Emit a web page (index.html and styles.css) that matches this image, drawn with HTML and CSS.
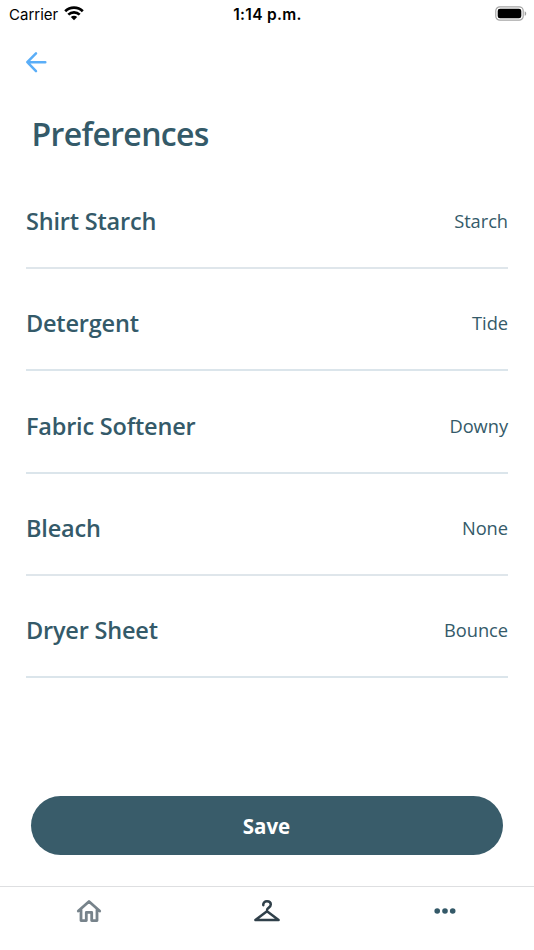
FILE: index.html
```html
<!DOCTYPE html>
<html lang="en">
<head>
<meta charset="utf-8">
<title>Preferences</title>
<link rel="stylesheet" href="styles.css">
</head>
<body>
<header class="status">
  <div class="carrier"><span>Carrier</span>
    <svg width="20" height="15" viewBox="0 0 20 15" fill="none" stroke="#000" stroke-width="2.7"><path d="M1.2 5.3C6.1.5 13.9.5 18.8 5.3M4.3 8.6c3.2-3.1 8.2-3.1 11.4 0"/><path d="M6.8 11.1c1.8-1.7 4.6-1.7 6.4 0L10 14.3z" fill="#000" stroke="none"/></svg>
  </div>
  <div class="time">1:14 p.m.</div>
  <svg class="battery" width="32" height="15" viewBox="0 0 32 15"><rect x=".8" y=".8" width="27.4" height="13.4" rx="4" fill="none" stroke="#a5a5a5" stroke-width="1.2"/><rect x="2.7" y="2.7" width="23.6" height="9.6" rx="2.3"/><path d="M29.7 5.2c2 .8 2 3.8 0 4.6z" fill="#a0a0a0"/></svg>
</header>
<nav class="back"><svg width="22" height="22" viewBox="0 0 22 22" fill="none" stroke="#5aaef8" stroke-width="2.5" stroke-linecap="round" stroke-linejoin="round"><path d="M20.300 11.200H2.500M11 2.300L2.300 11.200l8.700 8.900"/></svg></nav>
<h1>Preferences</h1>
<main class="list">
  <div class="row"><span class="label">Shirt Starch</span><span class="value">Starch</span></div>
  <div class="row"><span class="label">Detergent</span><span class="value">Tide</span></div>
  <div class="row"><span class="label">Fabric Softener</span><span class="value">Downy</span></div>
  <div class="row"><span class="label">Bleach</span><span class="value">None</span></div>
  <div class="row"><span class="label">Dryer Sheet</span><span class="value">Bounce</span></div>
</main>
<button class="save">Save</button>
<footer class="tabs">
  <div class="tab"><svg width="26" height="24" viewBox="0 0 26 24" fill="none" stroke="#77838b" stroke-width="2.8" stroke-linejoin="round" stroke-linecap="round"><path d="M2.300 12L13 2.500 23.700 12M5 10.500v11.100h5.300v-8.200h5.400v8.200H21V10.500"/></svg></div>
  <div class="tab"><svg width="28" height="24" viewBox="0 0 28 24" fill="none" stroke="#30404a" stroke-width="2.500" stroke-linejoin="round" stroke-linecap="round"><path d="M10.300 6.200C10 3.800 11.700 2.300 14 2.300c2.200 0 3.800 1.400 3.800 3.300 0 3.100-3.800 2.900-3.800 5.600v1L2.400 20.900h23.200L14 12.200"/></svg></div>
  <div class="tab"><svg width="22" height="24" viewBox="0 0 22 24" fill="#345968"><circle cx="3.200" cy="12" r="2.800"/><circle cx="11" cy="12" r="2.800"/><circle cx="18.700" cy="12" r="2.800"/></svg></div>
</footer>
</body>
</html>
```
FILE: styles.css
```css
* { box-sizing: border-box; }
body {
  margin: 0;
  height: 950px;
  display: flex;
  flex-direction: column;
  background: #fff;
  color: #345a69;
  font-family: "Open Sans", sans-serif;
  overflow: hidden;
}
.status {
  height: 28px;
  flex: none;
  display: grid;
  grid-template-columns: 1fr auto 1fr;
  align-items: center;
  padding: 0 8px 0 9px;
  color: #000;
  font: 15px/28px Inter, sans-serif;
}
.carrier { display: flex; align-items: center; gap: 6px; }
.carrier span { padding-top: 1px; }
.carrier svg { margin-top: -2px; }
.time { font-weight: 600; font-size: 15.5px; letter-spacing: .3px; padding-top: 1px; }
.battery { justify-self: end; margin: -2px -1px 0 0; }
.back { height: 22px; margin: 23px 0 0 25px; flex: none; }
.back svg { display: block; }
h1 { margin: 39px 0 0 31.5px; font-size: 32px; line-height: 44px; font-weight: 550; letter-spacing: -.65px; flex: none; }
.list { margin: 10.7px 26px 0; flex: none; }
.row {
  height: 102.35px;
  padding-top: 34.3px;
  display: flex;
  justify-content: space-between;
  border-bottom: 2px solid #dfe6eb;
  line-height: 40px;
}
.row:nth-child(2), .row:nth-child(3), .row:nth-child(5) { border-bottom-color: #dbe5eb; }
.label { font-size: 23.5px; font-weight: 570; letter-spacing: -.2px; }
.value { font-size: 18.300px; letter-spacing: -.05px; }
.save {
  height: 59px;
  margin: 118px 31px 0;
  flex: none;
  border: 0;
  border-radius: 30px;
  background: #395c6a;
  color: #fff;
  font: 700 20.500px/59px "Open Sans", sans-serif;
  padding: 1px 1px 0 0;
}
.tabs {
  height: 64px;
  margin-top: auto;
  flex: none;
  display: grid;
  grid-template-columns: repeat(3, 1fr);
  border-top: 1.5px solid #dedfe1;
  padding-top: 12px;
}
.tab { display: flex; justify-content: center; align-items: flex-start; }
```
